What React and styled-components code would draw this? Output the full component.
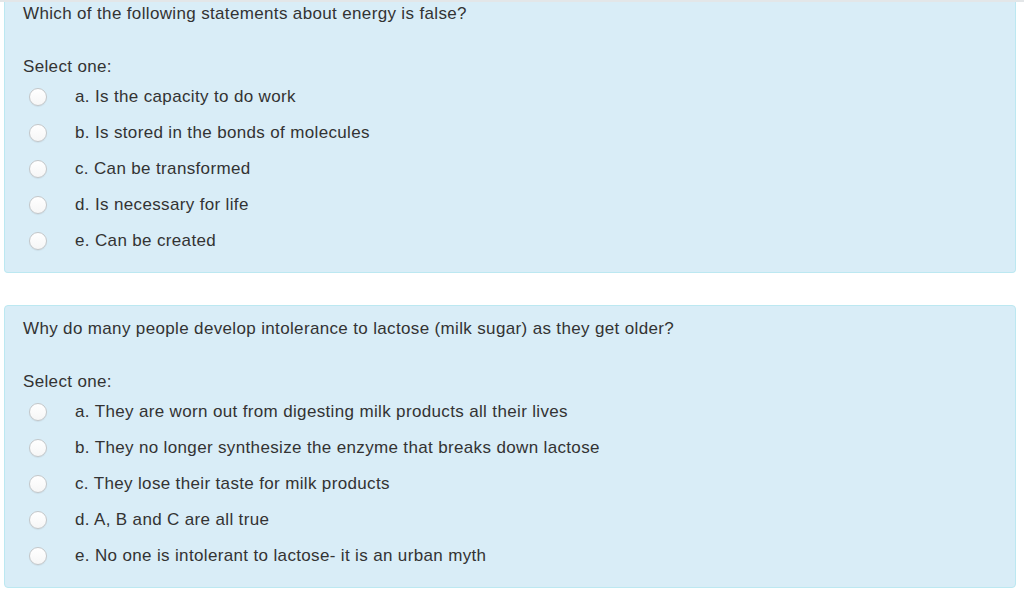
import React from "react";
import styled, { createGlobalStyle } from "styled-components";

const Global = createGlobalStyle`
  html, body { margin: 0; padding: 0; background: #ffffff; }
  body { font-family: "Liberation Sans", Arial, sans-serif; color: #333333; }
`;

const Page = styled.div`
  position: relative;
  padding: 0 8px 0 4px;
  height: 598px;
  overflow: hidden;
`;

const TopShade = styled.div`
  position: absolute;
  left: 0;
  right: 0;
  top: 0;
  height: 2px;
  background: #e3e6e8;
`;

const Card = styled.div`
  background: #d9edf7;
  border: 1px solid #bce8f1;
  border-radius: 4px;
  padding: 12px 18px 13px 18px;
  margin-bottom: 32px;
  ${(p) =>
    p.$continued &&
    `
    border-top: none;
    border-top-left-radius: 0;
    border-top-right-radius: 0;
    padding-top: 3px;
  `}
`;

const Text = styled.div`
  font-size: 17px;
  letter-spacing: 0.35px;
  line-height: 22px;
`;

const Question = styled(Text)`
  margin-bottom: 31px;
`;

const Prompt = styled(Text)`
  margin-bottom: 1px;
`;

const Options = styled.div`
  display: flex;
  flex-direction: column;
`;

const Option = styled.label`
  display: flex;
  align-items: center;
  height: 36px;
  font-size: 17px;
  letter-spacing: 0.35px;
`;

const Radio = styled.span`
  box-sizing: border-box;
  width: 18px;
  height: 18px;
  border-radius: 50%;
  margin-left: 6px;
  margin-right: 28px;
  border: 1px solid #c4c7c9;
  background: linear-gradient(#ffffff, #f6f6f6);
  box-shadow: 0 1px 1px rgba(0, 0, 0, 0.06);
  flex: none;
`;

const questions = [
  {
    text: "Which of the following statements about energy is false?",
    options: [
      "a. Is the capacity to do work",
      "b. Is stored in the bonds of molecules",
      "c. Can be transformed",
      "d. Is necessary for life",
      "e. Can be created",
    ],
  },
  {
    text: "Why do many people develop intolerance to lactose (milk sugar) as they get older?",
    options: [
      "a. They are worn out from digesting milk products all their lives",
      "b. They no longer synthesize the enzyme that breaks down lactose",
      "c. They lose their taste for milk products",
      "d. A, B and C are all true",
      "e. No one is intolerant to lactose- it is an urban myth",
    ],
  },
];

export default function App() {
  return (
    <>
      <Global />
      <Page>
        {questions.map((q, i) => (
          <Card key={i} $continued={i === 0}>
            <Question>{q.text}</Question>
            <Prompt>Select one:</Prompt>
            <Options>
              {q.options.map((o) => (
                <Option key={o}>
                  <Radio />
                  {o}
                </Option>
              ))}
            </Options>
          </Card>
        ))}
        <TopShade />
      </Page>
    </>
  );
}
